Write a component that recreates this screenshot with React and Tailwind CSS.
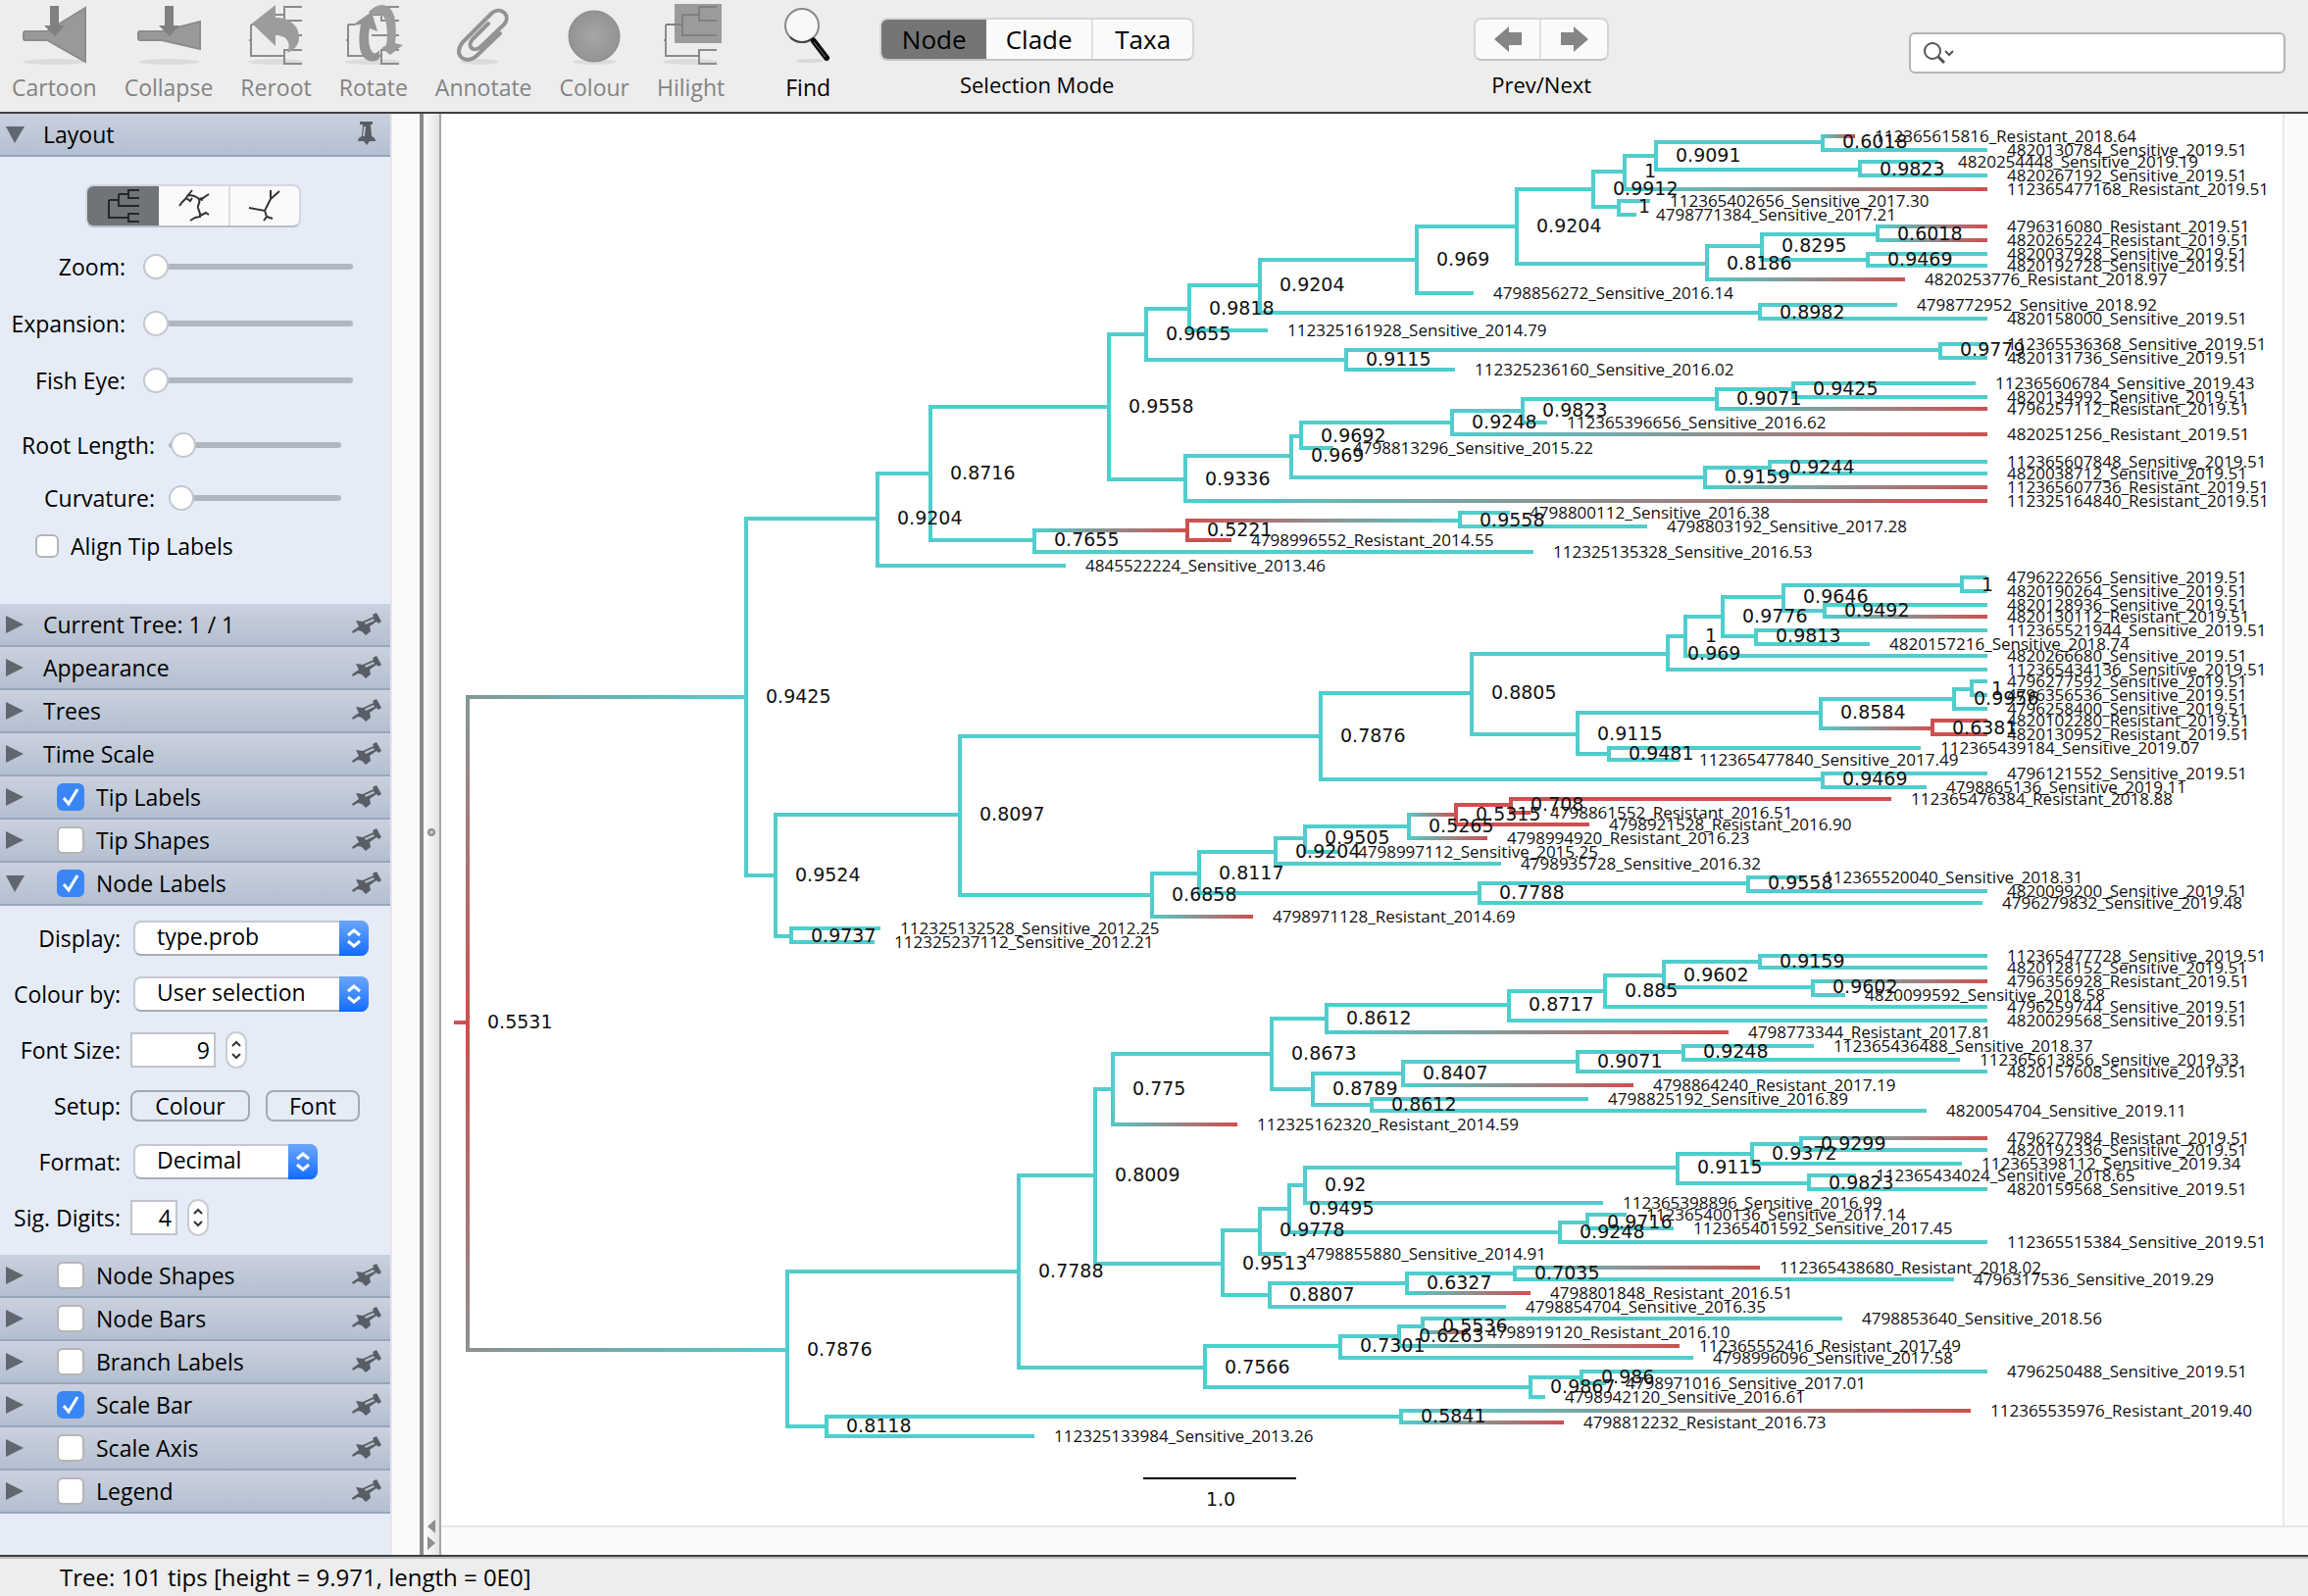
import React, { useId } from "react";

/* ---------- tree data ---------- */

const TEAL = "#50cdcd";
const RED = "#cd5050";

const S = (id, date) => ({ id, date, type: "Sensitive" });
const R = (id, date) => ({ id, date, type: "Resistant" });
const N = (x, prob, a, b) => ({ x, prob, kids: [a, b], color: TEAL });
const M = (x, prob, a, b) => ({ x, prob, kids: [a, b], color: RED });

const L = "2019.51";

const upperClade = N(895, "0.9204",
  N(949, "0.8716",
    N(1131, "0.9558",
      N(1169, "0.9655",
        N(1213, "0.9818",
          N(1285, "0.9204",
            N(1445, "0.969",
              N(1547, "0.9204",
                N(1625, "0.9912",
                  N(1657, "1",
                    N(1689, "0.9091",
                      N(1859, "0.6018", R("112365615816", "2018.64"), S("4820130784", L)),
                      N(1897, "0.9823", S("4820254448", "2019.19"), S("4820267192", L))),
                    R("112365477168", L)),
                  N(1651, "1", S("112365402656", "2017.30"), S("4798771384", "2017.21"))),
                N(1741, "0.8186",
                  N(1797, "0.8295",
                    N(1915, "0.6018", R("4796316080", L), R("4820265224", L)),
                    N(1905, "0.9469", S("4820037928", L), S("4820192728", L))),
                  R("4820253776", "2018.97"))),
              S("4798856272", "2016.14")),
            N(1795, "0.8982", S("4798772952", "2018.92"), S("4820158000", L))),
          S("112325161928", "2014.79")),
        N(1373, "0.9115",
          N(1979, "0.9779", S("112365536368", L), S("4820131736", L)),
          S("112325236160", "2016.02"))),
      N(1209, "0.9336",
        N(1317, "0.969",
          N(1327, "0.9692",
            N(1481, "0.9248",
              N(1553, "0.9823",
                N(1751, "0.9071",
                  N(1829, "0.9425", S("112365606784", "2019.43"), S("4820134992", L)),
                  R("4796257112", L)),
                S("112365396656", "2016.62")),
              R("4820251256", L)),
            S("4798813296", "2015.22")),
          N(1739, "0.9159",
            N(1805, "0.9244", S("112365607848", L), S("4820038712", L)),
            R("112365607736", L))),
        R("112325164840", L))),
    N(1055, "0.7655",
      M(1211, "0.5221",
        N(1489, "0.9558", S("4798800112", "2016.38"), S("4798803192", "2017.28")),
        R("4798996552", "2014.55")),
      S("112325135328", "2016.53"))),
  S("4845522224", "2013.46"));

const middleClade = N(791, "0.9524",
  N(979, "0.8097",
    N(1347, "0.7876",
      N(1501, "0.8805",
        N(1701, "0.969",
          N(1719, "1",
            N(1757, "0.9776",
              N(1819, "0.9646",
                N(2001, "1", S("4796222656", L), S("4820190264", L)),
                N(1861, "0.9492", S("4820128936", L), R("4820130112", L))),
              N(1791, "0.9813", S("112365521944", L), S("4820157216", "2018.74"))),
            S("4820266680", L)),
          S("112365434136", L)),
        N(1609, "0.9115",
          N(1857, "0.8584",
            N(1993, "0.9956",
              N(2011, "1", S("4796277592", L), S("4796356536", L)),
              S("4796258400", L)),
            M(1971, "0.6381", R("4820102280", L), R("4820130952", L))),
          N(1641, "0.9481", S("112365439184", "2019.07"), S("112365477840", "2017.49")))),
      N(1859, "0.9469", S("4796121552", L), S("4798865136", "2019.11"))),
    N(1175, "0.6858",
      N(1223, "0.8117",
        N(1301, "0.9204",
          N(1331, "0.9505",
            N(1437, "0.5265",
              M(1485, "0.5315",
                M(1541, "0.708", R("112365476384", "2018.88"), R("4798861552", "2016.51")),
                R("4798921528", "2016.90")),
              R("4798994920", "2016.23")),
            S("4798997112", "2015.25")),
          S("4798935728", "2016.32")),
        N(1509, "0.7788",
          N(1783, "0.9558", S("112365520040", "2018.31"), S("4820099200", L)),
          S("4796279832", "2019.48"))),
      R("4798971128", "2014.69"))),
  N(807, "0.9737", S("112325132528", "2012.25"), S("112325237112", "2012.21")));

const lowerClade = N(803, "0.7876",
  N(1039, "0.7788",
    N(1117, "0.8009",
      N(1135, "0.775",
        N(1297, "0.8673",
          N(1353, "0.8612",
            N(1539, "0.8717",
              N(1637, "0.885",
                N(1697, "0.9602",
                  N(1795, "0.9159", S("112365477728", L), S("4820128152", L)),
                  N(1849, "0.9602", R("4796356928", L), S("4820099592", "2018.58"))),
                S("4796259744", L)),
              S("4820029568", L)),
            R("4798773344", "2017.81")),
          N(1339, "0.8789",
            N(1431, "0.8407",
              N(1609, "0.9071",
                N(1717, "0.9248", S("112365436488", "2018.37"), S("112365613856", "2019.33")),
                S("4820157608", L)),
              R("4798864240", "2017.19")),
            N(1399, "0.8612", S("4798825192", "2016.89"), S("4820054704", "2019.11")))),
        R("112325162320", "2014.59")),
      N(1247, "0.9513",
        N(1285, "0.9778",
          N(1315, "0.9495",
            N(1331, "0.92",
              N(1711, "0.9115",
                N(1787, "0.9372",
                  N(1837, "0.9299", R("4796277984", L), S("4820192336", L)),
                  S("112365398112", "2019.34")),
                N(1845, "0.9823", S("112365434024", "2018.65"), S("4820159568", L))),
              S("112365398896", "2016.99")),
            N(1591, "0.9248",
              N(1619, "0.9716", S("112365400136", "2017.14"), S("112365401592", "2017.45")),
              S("112365515384", L))),
          S("4798855880", "2014.91")),
        N(1295, "0.8807",
          N(1435, "0.6327",
            N(1545, "0.7035", R("112365438680", "2018.02"), S("4796317536", "2019.29")),
            R("4798801848", "2016.51")),
          S("4798854704", "2016.35")))),
    N(1229, "0.7566",
      N(1367, "0.7301",
        N(1427, "0.6263",
          N(1451, "0.5536", S("4798853640", "2018.56"), R("4798919120", "2016.10")),
          R("112365552416", "2017.49")),
        S("4798996096", "2017.58")),
      N(1561, "0.9867",
        N(1613, "0.986", S("4796250488", L), S("4798971016", "2017.01")),
        S("4798942120", "2016.61")))),
  N(843, "0.8118",
    N(1429, "0.5841", R("112365535976", "2019.40"), R("4798812232", "2016.73")),
    S("112325133984", "2013.26")));

const root = M(477, "0.5531", N(761, "0.9425", upperClade, middleClade), lowerClade);

/* ---------- tree layout ---------- */

const FIRST_TIP_Y = 138;
const TIP_STEP = 13.26;
const YEAR = 155.45;
const LAST_X = 2027;
const snap = (y) => 2 * Math.round(y / 2) + 1;

function layoutTree(tree) {
  const nodes = [];
  const tips = [];
  const branches = [];
  const walk = (n) => {
    if (n.id) {
      const y = FIRST_TIP_Y + tips.length * TIP_STEP;
      const tip = {
        x: Math.round(LAST_X - (2019.51 - Number(n.date)) * YEAR),
        y: snap(y),
        raw: y,
        color: n.type === "Resistant" ? RED : TEAL,
        label: n.id + "_" + n.type + "_" + n.date,
      };
      tips.push(tip);
      return tip;
    }
    const kids = n.kids.map(walk);
    const raw = (kids[0].raw + kids[1].raw) / 2;
    const node = { x: n.x, y: snap(raw), raw, color: n.color, label: n.prob };
    nodes.push(node);
    kids.forEach((k) => branches.push({ from: node, to: k }));
    return node;
  };
  const top = walk(tree);
  return { top, nodes, tips, branches };
}

const laid = layoutTree(root);

function Tree() {
  const { top, nodes, tips, branches } = laid;
  return (
    <svg viewBox="450 116 1878 1440" className="block w-full" role="img" aria-label="Phylogenetic tree">
      <defs>
        {branches.map(({ from, to }, i) =>
          from.color === to.color ? null : (
            <linearGradient key={i} id={"b" + i} gradientUnits="userSpaceOnUse" x1={from.x} y1={from.y} x2={to.x} y2={to.y}>
              <stop offset="0" stopColor={from.color} />
              <stop offset="1" stopColor={to.color} />
            </linearGradient>
          )
        )}
      </defs>
      <g fill="none" strokeWidth="4">
        <path d={`M${top.x - 14} ${top.y}H${top.x}`} stroke={top.color} />
        {branches.map(({ from, to }, i) => (
          <path
            key={i}
            d={`M${from.x} ${from.y}V${to.y}H${to.x}`}
            stroke={from.color === to.color ? from.color : `url(#b${i})`}
          />
        ))}
      </g>
      <g fontFamily="'Open Sans', 'Noto Sans', sans-serif" fontSize="17" fill="#111">
        {tips.map((t, i) => (
          <text key={i} x={t.x + 20} y={t.y + 6}>{t.label}</text>
        ))}
      </g>
      <g fontFamily="'DejaVu Sans', sans-serif" fontSize="19" fill="#111">
        {nodes.map((n, i) => (
          <text key={i} x={n.x + 20} y={n.y + 6}>{n.label}</text>
        ))}
        <text x="1245" y="1536" textAnchor="middle">1.0</text>
      </g>
      <path d="M1166 1508H1322" stroke="#000" strokeWidth="2" />
    </svg>
  );
}

/* ---------- toolbar ---------- */

const G = "#8c8c8c";

function Shadow({ x, w }) {
  return <ellipse cx={x} cy="63" rx={w} ry="3" fill="#dcdcdc" />;
}

function CartoonIcon() {
  return (
    <svg width="66" height="75" viewBox="0 0 66 75">
      <Shadow x={33} w={32} />
      <path d="M2 34q0-2 2-2h22L65 8v55L26 41H4q-2 0-2-2z" fill="#999" stroke={G} strokeWidth="2" />
      <path d="M29 6h9v20h6L34 37 23 26h6z" fill="#808080" />
    </svg>
  );
}

function CollapseIcon() {
  return (
    <svg width="66" height="75" viewBox="0 0 66 75">
      <Shadow x={33} w={31} />
      <path d="M2 34q0-2 2-2h22l39-10v28L26 41H4q-2 0-2-2z" fill="#999" stroke={G} strokeWidth="2" />
      <path d="M29 6h9v20h6L34 37 23 26h6z" fill="#808080" />
    </svg>
  );
}

function TreeLines({ hide }) {
  return (
    <path
      d={hide ? "M3 41H5M5 25V57H39M5 25H22M57 51H39V65H57" : "M3 41H5M5 25V57H39M5 25H12M57 7H39V21H57M39 15H28M57 51H39V65H57M45 36H57"}
      fill="none"
      stroke={G}
      strokeWidth="2"
    />
  );
}

function RerootIcon() {
  return (
    <svg width="62" height="75" viewBox="0 0 62 75">
      <Shadow x={30} w={28} />
      <TreeLines />
      <path d="M6 24L30 5v13c14 0 24 8 24 20 0 8-5 13-12 16 4-9 1-18-12-18v11z" fill="#9c9c9c" />
    </svg>
  );
}

function RotateIcon() {
  return (
    <svg width="62" height="75" viewBox="0 0 62 75">
      <Shadow x={30} w={28} />
      <TreeLines />
      <path d="M29 36H45" stroke={G} strokeWidth="2" />
      <path d="M26 12c12-12 24-8 27 8 1 9 1 16 0 24l8 2-13 10-9-7 5-3c2-10 1-31-6-31-3-1-6 0-9 1z" fill="#9c9c9c" />
      <path d="M9 26l20-14 6 20-8-3c-2 9-1 22 4 25 3 1 4-1 6-3v9c-9 6-18 1-20-11-1-8-1-15 1-24z" fill="#949494" />
    </svg>
  );
}

function AnnotateIcon() {
  return (
    <svg width="56" height="75" viewBox="0 0 56 75">
      <Shadow x={24} w={20} />
      <g fill="none" stroke="#939393" strokeWidth="4" strokeLinecap="round" strokeLinejoin="round">
        <path d="M33 24L17 40c-6 7 0 14 8 8L49 25c8-9-3-19-12-12L7 43c-11 13 3 24 14 14L45 34" />
      </g>
    </svg>
  );
}

function ColourIcon() {
  return (
    <svg width="56" height="75" viewBox="0 0 56 75">
      <defs>
        <radialGradient id="ball">
          <stop offset="0" stopColor="#a6a6a6" />
          <stop offset="1" stopColor="#939393" />
        </radialGradient>
      </defs>
      <Shadow x={28} w={22} />
      <circle cx="28" cy="37" r="26" fill="url(#ball)" stroke="#888" />
    </svg>
  );
}

function HilightIcon() {
  return (
    <svg width="62" height="75" viewBox="0 0 62 75">
      <Shadow x={30} w={28} />
      <path d="M14 4h48v40H14z" fill="#9b9b9b" />
      <TreeLines hide />
      <path d="M5 25H22M22 15V36H57M22 15H39M57 7H39V21H57" fill="none" stroke="#808080" strokeWidth="2" />
    </svg>
  );
}

function FindIcon() {
  return (
    <svg width="50" height="75" viewBox="0 0 50 75">
      <ellipse cx="27" cy="62" rx="14" ry="2" fill="#d8d8d8" />
      <circle cx="19" cy="26" r="17" fill="#f8f8f8" stroke="#8a8a8a" strokeWidth="2" />
      <path d="M7 38a17 17 0 0 0 24 0" fill="none" stroke="#444" strokeWidth="2" />
      <path d="M31 42L44 59" stroke="#0a0a0a" strokeWidth="6" strokeLinecap="round" />
      <path d="M31 43L43 58" stroke="#777" strokeWidth="1" />
    </svg>
  );
}

function Tool({ icon, label, enabled }) {
  return (
    <button
      type="button"
      disabled={!enabled}
      className={
        "flex shrink-0 flex-col items-center text-[23px] leading-7 " + (enabled ? "text-black" : "text-[#838383]")
      }
    >
      {icon}
      <span>{label}</span>
    </button>
  );
}

function Toolbar() {
  return (
    <header className="flex h-[116px] shrink-0 items-start border-b-2 border-[#404044] bg-[#ededed] pl-3">
      <div className="flex gap-7">
        <Tool icon={<CartoonIcon />} label="Cartoon" />
        <Tool icon={<CollapseIcon />} label="Collapse" />
        <Tool icon={<RerootIcon />} label="Reroot" />
        <Tool icon={<RotateIcon />} label="Rotate" />
        <Tool icon={<AnnotateIcon />} label="Annotate" />
        <Tool icon={<ColourIcon />} label="Colour" />
        <Tool icon={<HilightIcon />} label="Hilight" />
      </div>
      <div className="ml-15">
        <Tool icon={<FindIcon />} label="Find" enabled />
      </div>
      <div className="ml-12 flex flex-col items-center pt-[18px]">
        <div className="flex h-11 overflow-hidden rounded-lg border-2 border-[#d6d6d6] border-b-[#c4c4c4] bg-[#fafafa] text-[26px] leading-10">
          <button type="button" className="w-[107px] bg-[#757575]">Node</button>
          <button type="button" className="w-[109px] border-r-2 border-[#e0e0e0]">Clade</button>
          <button type="button" className="w-[101px]">Taxa</button>
        </div>
        <span className="mt-2.5 text-[22px] leading-7">Selection Mode</span>
      </div>
      <div className="ml-[285px] flex flex-col items-center pt-[18px]">
        <div className="flex h-11 rounded-lg border-2 border-[#d6d6d6] border-b-[#c4c4c4] bg-[#fafafa]">
          <button type="button" aria-label="Previous" className="flex w-[67px] items-center justify-center border-r-2 border-[#e0e0e0]">
            <svg width="28" height="26" viewBox="0 0 28 26"><path d="M0 13L15 0v6h13v13H15v7z" fill="#858585" /></svg>
          </button>
          <button type="button" aria-label="Next" className="flex w-[67px] items-center justify-center">
            <svg width="28" height="26" viewBox="0 0 28 26"><path d="M28 13L13 0v6H0v13h13v7z" fill="#858585" /></svg>
          </button>
        </div>
        <span className="mt-2.5 text-[22px] leading-7">Prev/Next</span>
      </div>
      <label className="mt-[33px] mr-[23px] ml-auto flex h-[42px] w-96 items-center rounded-md border-2 border-[#b4b4b4] bg-white pl-3">
        <svg width="34" height="26" viewBox="0 0 34 26" fill="none" stroke="#555" strokeWidth="2">
          <circle cx="10" cy="11" r="8" />
          <path d="M16 17l6 6" strokeWidth="3" />
          <path d="M23 11l4 4 4-4" />
        </svg>
        <input type="text" aria-label="Search" className="min-w-0 flex-1 bg-transparent text-[22px] outline-none" />
      </label>
    </header>
  );
}

/* ---------- sidebar ---------- */

function Pin({ fixed }) {
  if (fixed) {
    return (
      <svg width="32" height="28" viewBox="0 0 32 28" fill="#595d65">
        <path d="M9 1h13v3h-2l1 12c2 1 4 2 4 5h-6l-3 4-3-4H7c0-3 2-4 4-5l1-12H9z" />
        <path d="M13 6h2l-1 10h-2z" fill="#b9c1ce" />
      </svg>
    );
  }
  return (
    <svg width="32" height="24" viewBox="0 0 32 24" fill="#595d65">
      <path d="M1 19l7-5-3-6 7 1 11-5-1-2 4-2 5 9-3 2-2-2-7 5 1 5-5 4-4-4-4-1-5 3z" />
      <path d="M14 10l9-4 1 2-9 4z" fill="#b9c1ce" />
    </svg>
  );
}

function Check({ id, checked, label, small }) {
  return (
    <span className={"relative block shrink-0 " + (small ? "size-6" : "size-7")}>
      <input
        type="checkbox"
        id={id}
        defaultChecked={checked}
        aria-label={label}
        className="peer block size-full appearance-none rounded-md border-2 border-[#b5b5b5] bg-white checked:border-[#3b86f7] checked:bg-[#3b86f7]"
      />
      <svg viewBox="0 0 28 28" className="pointer-events-none absolute inset-0 hidden size-full peer-checked:block" fill="none" stroke="#fff" strokeWidth="3">
        <path d="M7 15l5 6L21 6" />
      </svg>
    </span>
  );
}

function Header({ title, open, check, pinned }) {
  const id = useId();
  const hasCheck = check !== undefined;
  return (
    <div className="flex h-11 items-center border-b-2 border-[#98a6bb] bg-linear-to-b from-[#cbd1de] to-[#b3bfd0] pr-2 pl-1.5">
      <button type="button" aria-label={"Toggle " + title} aria-expanded={!!open} className="w-[38px] shrink-0">
        <svg width="20" height="20" viewBox="0 0 20 20" fill="#62666e">
          <path d={open ? "M0 2h19L9 19z" : "M0 1l18 9L0 19z"} />
        </svg>
      </button>
      {hasCheck ? (
        <div className="flex items-center gap-3 pl-3.5">
          <Check id={id} checked={check} />
          <label htmlFor={id}>{title}</label>
        </div>
      ) : (
        <span>{title}</span>
      )}
      <button type="button" aria-label={"Pin " + title} className="ml-auto">
        <Pin fixed={pinned} />
      </button>
    </div>
  );
}

const RANGE =
  "h-[25px] appearance-none bg-transparent [&::-webkit-slider-runnable-track]:h-1.5 [&::-webkit-slider-runnable-track]:rounded-full [&::-webkit-slider-runnable-track]:bg-[#b0b7c1] [&::-webkit-slider-thumb]:-mt-2.5 [&::-webkit-slider-thumb]:size-[26px] [&::-webkit-slider-thumb]:appearance-none [&::-webkit-slider-thumb]:rounded-full [&::-webkit-slider-thumb]:border-2 [&::-webkit-slider-thumb]:border-[#c3c8d0] [&::-webkit-slider-thumb]:bg-white";

function Slider({ label, value = 0 }) {
  const id = useId();
  return (
    <div className="flex h-[58px] items-center">
      <label htmlFor={id} className="w-32 text-right">{label}</label>
      <input id={id} type="range" defaultValue={value} className={"ml-[18px] w-[214px] " + RANGE} />
    </div>
  );
}

function ShortSlider({ label, value = 0 }) {
  const id = useId();
  return (
    <div className="flex h-[54px] items-center">
      <label htmlFor={id} className="w-[158px] text-right">{label}</label>
      <input id={id} type="range" defaultValue={value} className={"ml-3.5 w-[176px] " + RANGE} />
    </div>
  );
}

function LayoutSection() {
  const seg = "flex items-center justify-center";
  return (
    <div className="pt-7 pb-[37px]">
      <div className="mb-[11px] ml-[87px] flex h-11 w-[220px] overflow-hidden rounded-lg border-2 border-[#d3d7de] border-b-[#b8bdc6] bg-[#fafafa]">
        <button type="button" aria-label="Rectangular layout" className={seg + " w-[73px] bg-[#707378]"}>
          <svg width="34" height="34" viewBox="0 0 34 34" fill="none" stroke="#25272a" strokeWidth="2">
            <path d="M2 11V29H22M2 11H12M12 5V17H33M12 5H22M33 1H22V9H33M33 25H22V33H33" />
          </svg>
        </button>
        <button type="button" aria-label="Polar layout" className={seg + " w-[73px] border-r-2 border-[#dedede]"}>
          <svg width="32" height="34" viewBox="0 0 32 34" fill="none" stroke="#333" strokeWidth="2">
            <path d="M1 17l3-4 3-3 3-4 4-5M8 9l4 3 2-3M9 6c5 0 9 1 12 4l4-1 6-4M21 10l4 1M21 10c2 5-2 5-1 9l2 6 0 4M22 27l6-3 3 2M22 28l-5 1-5 3" />
          </svg>
        </button>
        <button type="button" aria-label="Radial layout" className={seg + " flex-1"}>
          <svg width="34" height="34" viewBox="0 0 34 34" fill="none" stroke="#333" strokeWidth="2">
            <path d="M1 19l16 3 6-12 0-9M23 10l9-8M17 22l2 6 6 2M19 28l-3 4" />
          </svg>
        </button>
      </div>
      <Slider label="Zoom:" />
      <Slider label="Expansion:" />
      <Slider label="Fish Eye:" />
      <div className="mt-2.5">
        <ShortSlider label="Root Length:" value={1} />
        <ShortSlider label="Curvature:" />
      </div>
      <div className="flex h-11 items-center gap-3 pl-9">
        <Check id="align-tips" small />
        <label htmlFor="align-tips">Align Tip Labels</label>
      </div>
    </div>
  );
}

function Row({ label, htmlFor, children }) {
  return (
    <div className="flex h-9 items-center">
      <label htmlFor={htmlFor} className="w-[123px] shrink-0 text-right">{label}</label>
      {children}
    </div>
  );
}

function Picker({ id, value, width }) {
  return (
    <span className={"relative ml-[13px] block h-9 " + width}>
      <select id={id} className="block size-full appearance-none rounded-lg border-2 border-[#c3c8d0] border-b-[#a8adb6] bg-white pb-1 pl-[22px] leading-7">
        <option>{value}</option>
      </select>
      <span className="pointer-events-none absolute top-0 right-0 flex h-9 w-[30px] items-center justify-center rounded-r-lg bg-linear-to-b from-[#6aa5f8] to-[#0a6aff]">
        <svg width="14" height="20" viewBox="0 0 14 20" fill="none" stroke="#fff" strokeWidth="3">
          <path d="M1 7l6-5 6 5M1 13l6 5 6-5" />
        </svg>
      </span>
    </span>
  );
}

function Stepper({ name }) {
  return (
    <span className="ml-2.5 flex h-[38px] w-[22px] flex-col items-center justify-around rounded-full border-2 border-[#c8ccd3] bg-white py-1">
      <button type="button" aria-label={"Increase " + name}>
        <svg width="11" height="7" viewBox="0 0 11 7" className="block" fill="none" stroke="#333" strokeWidth="2"><path d="M1 6l4-4 4 4" /></svg>
      </button>
      <button type="button" aria-label={"Decrease " + name}>
        <svg width="11" height="7" viewBox="0 0 11 7" className="block" fill="none" stroke="#333" strokeWidth="2"><path d="M1 1l4 4 4-4" /></svg>
      </button>
    </span>
  );
}

function NodeLabelsSection() {
  const box = "ml-2.5 h-9 border-2 border-[#c0c4cc] bg-white pr-1 text-right";
  const btn = "h-8 rounded-lg border-2 border-[#a4aab5] leading-6";
  return (
    <div className="flex flex-col gap-[21px] pt-[15px] pb-5">
      <Row label="Display:" htmlFor="display"><Picker id="display" value="type.prob" width="w-[240px]" /></Row>
      <Row label="Colour by:" htmlFor="colour-by"><Picker id="colour-by" value="User selection" width="w-[240px]" /></Row>
      <Row label="Font Size:" htmlFor="font-size">
        <input id="font-size" type="text" defaultValue="9" className={box + " w-[87px]"} />
        <Stepper name="font size" />
      </Row>
      <Row label="Setup:" htmlFor="setup-colour">
        <button id="setup-colour" type="button" className={btn + " ml-2.5 w-[122px]"}>Colour</button>
        <button type="button" className={btn + " ml-4 w-24"}>Font</button>
      </Row>
      <Row label="Format:" htmlFor="format"><Picker id="format" value="Decimal" width="w-[188px]" /></Row>
      <Row label="Sig. Digits:" htmlFor="digits">
        <input id="digits" type="text" defaultValue="4" className={box + " w-12"} />
        <Stepper name="significant digits" />
      </Row>
    </div>
  );
}

function Sidebar() {
  return (
    <aside className="w-[398px] shrink-0 bg-[#e5ecf7] text-[23px] leading-8">
      <Header title="Layout" open pinned />
      <LayoutSection />
      <Header title="Current Tree: 1 / 1" />
      <Header title="Appearance" />
      <Header title="Trees" />
      <Header title="Time Scale" />
      <Header title="Tip Labels" check={true} />
      <Header title="Tip Shapes" check={false} />
      <Header title="Node Labels" check={true} open />
      <NodeLabelsSection />
      <Header title="Node Shapes" check={false} />
      <Header title="Node Bars" check={false} />
      <Header title="Branch Labels" check={false} />
      <Header title="Scale Bar" check={true} />
      <Header title="Scale Axis" check={false} />
      <Header title="Legend" check={false} />
    </aside>
  );
}

function Divider() {
  return (
    <div className="flex w-[22px] shrink-0 flex-col items-center border-r-2 border-l-4 border-r-[#a6a6a6] border-l-[#8a8a8a] bg-linear-to-r from-white to-[#e2e2e2] pb-1">
      <div className="flex flex-1 items-center">
        <span className="size-2 rounded-full border-2 border-[#8f8f8f] bg-[#c4c4c4]" />
      </div>
      <svg width="8" height="32" viewBox="0 0 8 32" className="-mt-8 block" fill="#8f8f8f">
        <path d="M8 0v14L0 7zM0 17v14l8-7z" />
      </svg>
    </div>
  );
}

export default function App() {
  return (
    <div className="flex min-h-screen flex-col bg-white font-['Open_Sans','Noto_Sans',sans-serif] text-black">
      <Toolbar />
      <main className="flex flex-1">
        <Sidebar />
        <div className="w-[30px] shrink-0 border-l-2 border-[#e6e6e6] bg-[#fafafa]" />
        <Divider />
        <section className="flex min-w-0 flex-1 flex-col">
          <div className="flex flex-1">
            <div className="min-w-0 flex-1"><Tree /></div>
            <div className="w-[26px] shrink-0 border-l-2 border-[#e8e8e8] bg-[#fafafa]" />
          </div>
          <div className="h-[30px] border-t-2 border-[#e6e6e6] bg-[#fafafa]" />
        </section>
      </main>
      <footer className="h-[42px] shrink-0 border-t-2 border-[#404044] bg-[#ededed]">
        <p className="border-t-2 border-[#bdbdbd] pl-[61px] text-[24px] leading-[38px]">
          Tree: 101 tips [height = 9.971, length = 0E0]
        </p>
      </footer>
    </div>
  );
}
